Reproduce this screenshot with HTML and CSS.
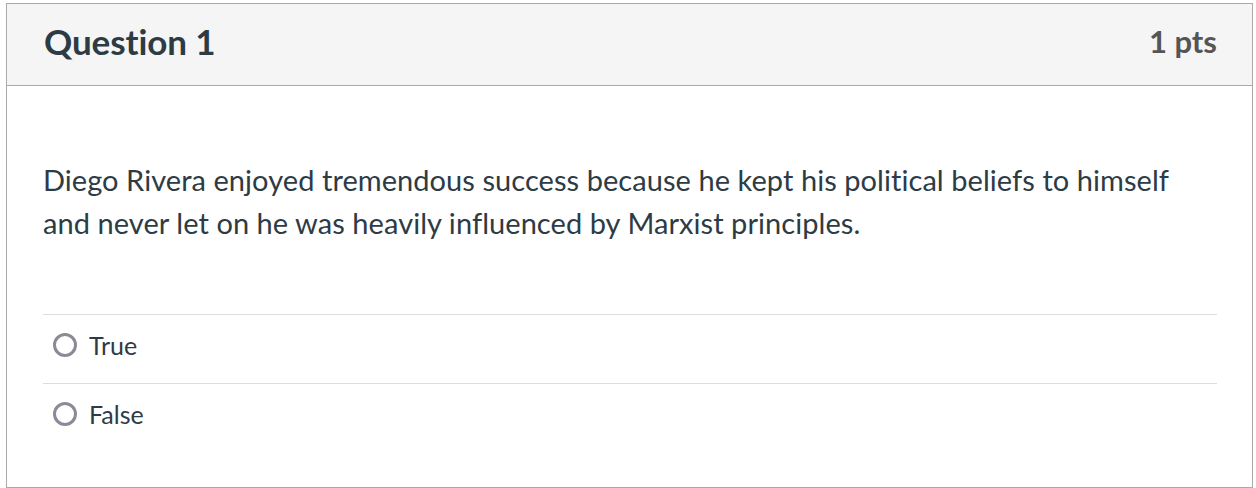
FILE: index.html
```html
<!DOCTYPE html>
<html>
<head>
<meta charset="utf-8">
<link rel="stylesheet" href="styles.css">
</head>
<body>
<div class="question">
  <div class="header">
    <h2 class="title">Question 1</h2>
    <span class="pts">1 pts</span>
  </div>
  <div class="body">
    <p class="text">Diego Rivera enjoyed tremendous success because he kept his political beliefs to himself and never let on he was heavily influenced by Marxist principles.</p>
    <div class="answers">
      <label class="answer"><span class="radio"></span><span class="label">True</span></label>
      <label class="answer"><span class="radio"></span><span class="label">False</span></label>
    </div>
  </div>
</div>
</body>
</html>
```
FILE: styles.css
```css
* { box-sizing: border-box; }
html, body { margin: 0; padding: 0; background: #fff; }
body { font-family: Lato, "Open Sans", sans-serif; color: #2d3b45; }
.question {
  margin: 3px 0 0 6px;
  width: 1247px;
  height: 485px;
  border: 1px solid #aaaaaa;
}
.header {
  height: 82px;
  background: #f5f5f5;
  border-bottom: 1px solid #aaaaaa;
  display: flex;
  align-items: center;
  justify-content: space-between;
  padding: 0 35px 8px 37px;
}
.title {
  margin: 0;
  font-size: 35px;
  font-weight: 700;
  color: #2d3b45;
  letter-spacing: -0.1px;
}
.pts {
  font-size: 31px;
  font-weight: 700;
  color: #555555;
}
.body {
  padding: 0 35px 0 36px;
}
.text {
  margin: 72px 0 0 0;
  font-size: 29px;
  line-height: 43px;
  letter-spacing: 0.06px;
  color: #2d3b45;
}
.answers {
  margin-top: 70px;
}
.answer {
  display: flex;
  align-items: center;
  height: 69px;
  border-top: 1px solid #dddddd;
  padding: 0 0 8px 10px;
}
.radio {
  width: 24px;
  height: 24px;
  border: 3px solid #8b8a96;
  border-radius: 50%;
  margin-right: 12px;
}
.label {
  font-size: 25px;
}
```
